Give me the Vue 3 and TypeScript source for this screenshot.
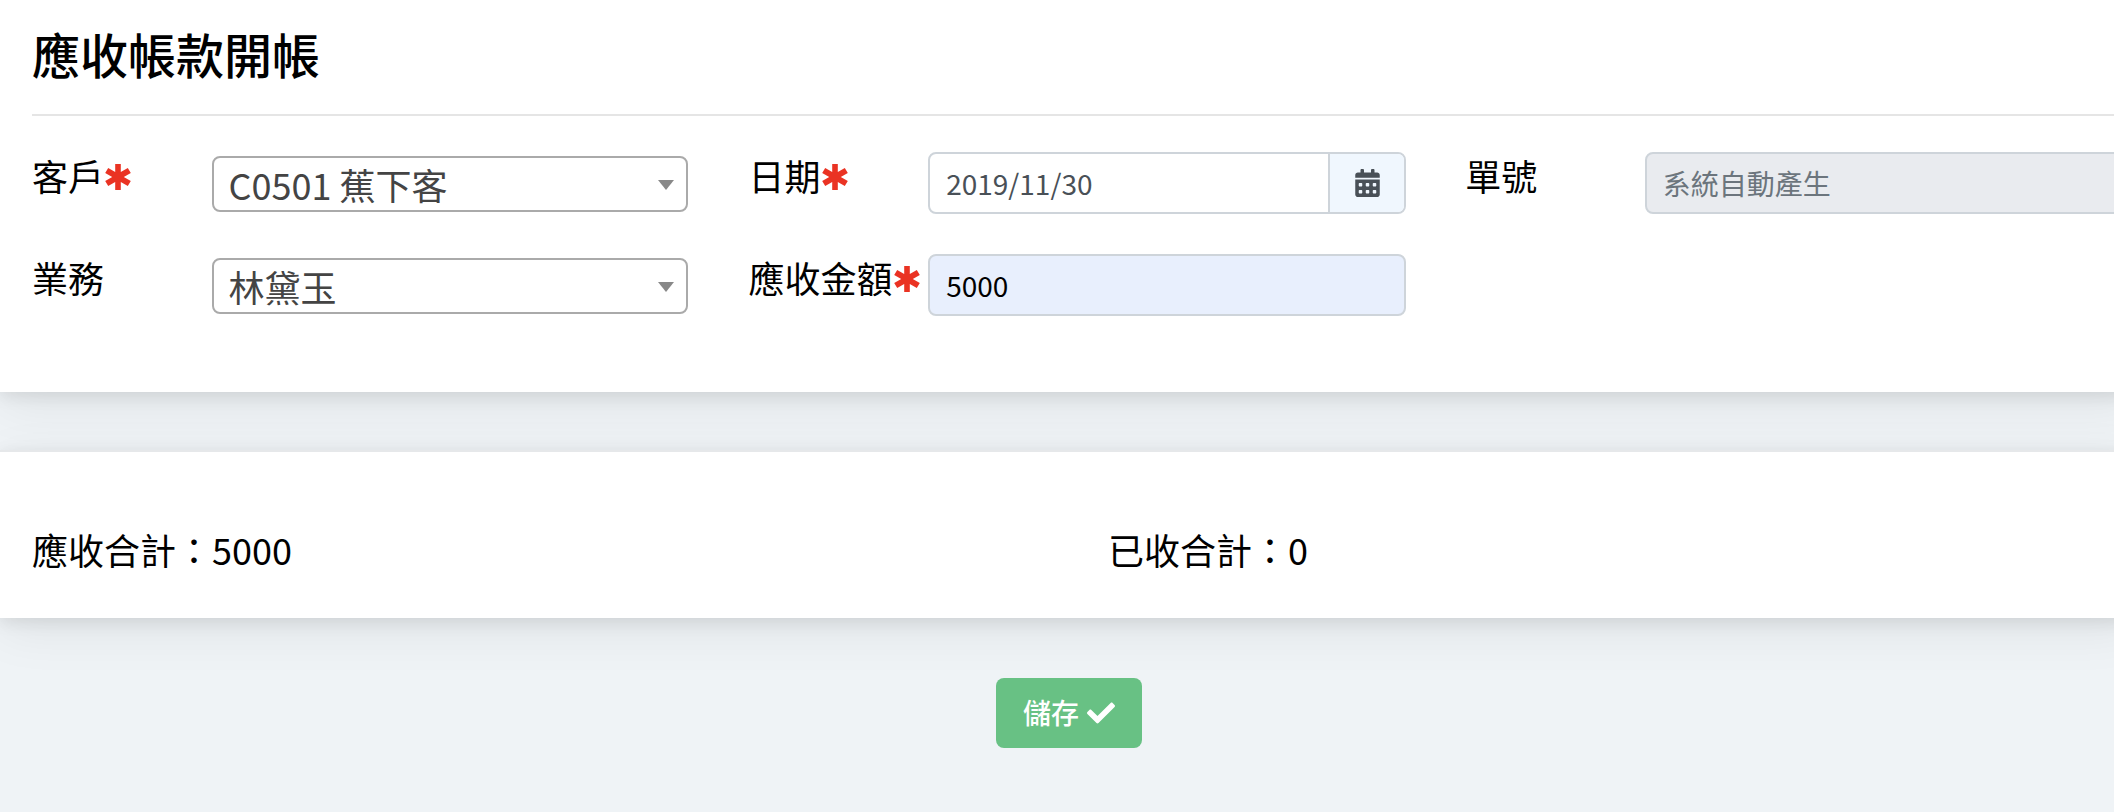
<script setup lang="ts">
import { ref } from 'vue'

const amount = ref<string>('5000')
const received = ref<number>(0)
const date = ref<string>('2019/11/30')
</script>

<template>
  <main class="page">
    <section class="card form-card">
      <h1>應收帳款開帳</h1>
      <div class="fields">
        <div class="field">
          <label>客戶<svg class="star" viewBox="0 0 26 26"><path d="M10.2 0h5.6v8l7-4 3 5.1-7 3.9 7 3.9-3 5.1-7-4v8h-5.6v-8l-7 4-3-5.1 7-3.9-7-3.9 3-5.1 7 4z" /></svg></label>
          <div class="select"><span>C0501 蕉下客</span><i class="caret"></i></div>
        </div>
        <div class="field">
          <label>日期<svg class="star" viewBox="0 0 26 26"><path d="M10.2 0h5.6v8l7-4 3 5.1-7 3.9 7 3.9-3 5.1-7-4v8h-5.6v-8l-7 4-3-5.1 7-3.9-7-3.9 3-5.1 7 4z" /></svg></label>
          <div class="group">
            <input v-model="date" type="text" />
            <span class="addon">
              <svg class="calendar" viewBox="0 0 448 512"><path d="M0 464c0 26.500 21.500 48 48 48h352c26.500 0 48-21.500 48-48V192H0v272zm320-196c0-6.600 5.400-12 12-12h40c6.600 0 12 5.400 12 12v40c0 6.600-5.400 12-12 12h-40c-6.600 0-12-5.400-12-12v-40zm0 128c0-6.600 5.400-12 12-12h40c6.600 0 12 5.400 12 12v40c0 6.600-5.400 12-12 12h-40c-6.600 0-12-5.400-12-12v-40zM192 268c0-6.600 5.400-12 12-12h40c6.600 0 12 5.400 12 12v40c0 6.600-5.400 12-12 12h-40c-6.600 0-12-5.400-12-12v-40zm0 128c0-6.600 5.400-12 12-12h40c6.600 0 12 5.400 12 12v40c0 6.600-5.400 12-12 12h-40c-6.600 0-12-5.400-12-12v-40zM64 268c0-6.600 5.400-12 12-12h40c6.600 0 12 5.400 12 12v40c0 6.600-5.400 12-12 12H76c-6.600 0-12-5.400-12-12v-40zm0 128c0-6.600 5.400-12 12-12h40c6.600 0 12 5.400 12 12v40c0 6.600-5.400 12-12 12H76c-6.600 0-12-5.400-12-12v-40zM400 64h-48V16c0-8.800-7.200-16-16-16h-32c-8.800 0-16 7.200-16 16v48H160V16c0-8.800-7.200-16-16-16h-32c-8.800 0-16 7.200-16 16v48H48C21.500 64 0 85.500 0 112v48h448v-48c0-26.500-21.500-48-48-48z" /></svg>
            </span>
          </div>
        </div>
        <div class="field">
          <label>單號</label>
          <div class="group disabled"><input type="text" placeholder="系統自動產生" disabled /></div>
        </div>
        <div class="field">
          <label>業務</label>
          <div class="select"><span>林黛玉</span><i class="caret"></i></div>
        </div>
        <div class="field">
          <label>應收金額<svg class="star" viewBox="0 0 26 26"><path d="M10.2 0h5.6v8l7-4 3 5.1-7 3.9 7 3.9-3 5.1-7-4v8h-5.6v-8l-7 4-3-5.1 7-3.9-7-3.9 3-5.1 7 4z" /></svg></label>
          <div class="group filled"><input v-model="amount" type="text" /></div>
        </div>
      </div>
    </section>

    <section class="card totals">
      <div>應收合計：{{ amount }}</div>
      <div>已收合計：{{ received }}</div>
    </section>

    <div class="actions">
      <button type="button">
        <span>儲存</span>
        <svg class="check" viewBox="0 0 512 512"><path d="M173.898 439.404l-166.400-166.400c-9.997-9.997-9.997-26.206 0-36.204l36.203-36.204c9.997-9.998 26.207-9.998 36.204 0L192 312.690 432.095 72.596c9.997-9.997 26.207-9.997 36.204 0l36.203 36.204c9.997 9.997 9.997 26.206 0 36.204l-294.400 294.401c-9.998 9.997-26.207 9.997-36.204-.001z" /></svg>
      </button>
    </div>
  </main>
</template>

<style>
body {
  overflow: hidden;
  background: #eff3f6;
}
</style>

<style scoped>
.page {
  box-sizing: border-box;
  width: 2138px;
  height: 812px;
  color: #000;
  font-family: "Noto Sans CJK TC", sans-serif;
  font-size: 36px;
  line-height: 54px;
}
.card {
  box-sizing: border-box;
  background: #fff;
  box-shadow: 0 4px 16px rgba(0, 0, 0, 0.09), 0 12px 48px rgba(0, 0, 0, 0.07);
}
.form-card {
  height: 392px;
  padding-left: 32px;
}
h1 {
  box-sizing: border-box;
  height: 116px;
  margin: 0;
  padding-top: 24px;
  border-bottom: 2px solid #e5e5e5;
  font-size: 48px;
  line-height: 58px;
  font-weight: 500;
}
.fields {
  display: grid;
  grid-template-columns: repeat(3, 716.6px);
  grid-auto-rows: 62px;
  row-gap: 40px;
  padding-top: 36px;
}
.field {
  display: grid;
  grid-template-columns: 179.6px 478px;
  align-items: start;
}
label {
  display: flex;
  align-items: center;
  height: 54px;
  margin-top: -4px;
  white-space: nowrap;
}
.star {
  flex: none;
  width: 26px;
  height: 26px;
  margin: 4px 0 0 1px;
  fill: #ea3323;
}
.select {
  box-sizing: border-box;
  display: flex;
  align-items: center;
  justify-content: space-between;
  width: 476px;
  height: 56px;
  margin-top: 4px;
  padding: 0 12px 0 15px;
  border: 2px solid #aaa;
  border-radius: 8px;
  color: #444;
}
.caret {
  margin-top: 1px;
  border: 8px solid transparent;
  border-top: 10px solid #888;
  border-bottom: 0;
}
.group {
  box-sizing: border-box;
  display: flex;
  width: 478px;
  height: 62px;
  overflow: hidden;
  border: 2px solid #ced4da;
  border-radius: 8px;
}
input {
  box-sizing: border-box;
  flex: 1;
  min-width: 0;
  padding: 0 16px;
  border: 0;
  background: transparent;
  color: #495057;
  font: 28px "Noto Sans CJK TC", sans-serif;
}
.filled {
  background: #e8effd;
}
.filled input {
  color: #000;
}
.disabled {
  background: #e9ebef;
}
input::placeholder {
  color: #6c757d;
  opacity: 1;
}
.addon {
  box-sizing: border-box;
  display: flex;
  align-items: center;
  justify-content: center;
  width: 76px;
  border-left: 2px solid #ced4da;
  background: #f0f7fe;
}
.calendar {
  width: 25px;
  height: 28px;
  fill: #495057;
}
.totals {
  display: grid;
  grid-template-columns: 1076px 1fr;
  height: 168px;
  margin-top: 58px;
  padding: 70px 0 0 32px;
  border-top: 2px solid #e6e8ea;
}
.actions {
  display: flex;
  justify-content: center;
  padding-top: 60px;
}
button {
  display: flex;
  align-items: center;
  justify-content: center;
  gap: 8px;
  width: 146px;
  height: 70px;
  padding: 0;
  border: 0;
  border-radius: 8px;
  background: #68c184;
  color: #fff;
  font: 500 28px "Noto Sans CJK TC", sans-serif;
}
button span {
  margin-bottom: 2px;
}
.check {
  width: 28px;
  height: 28px;
  fill: #fff;
}
</style>
